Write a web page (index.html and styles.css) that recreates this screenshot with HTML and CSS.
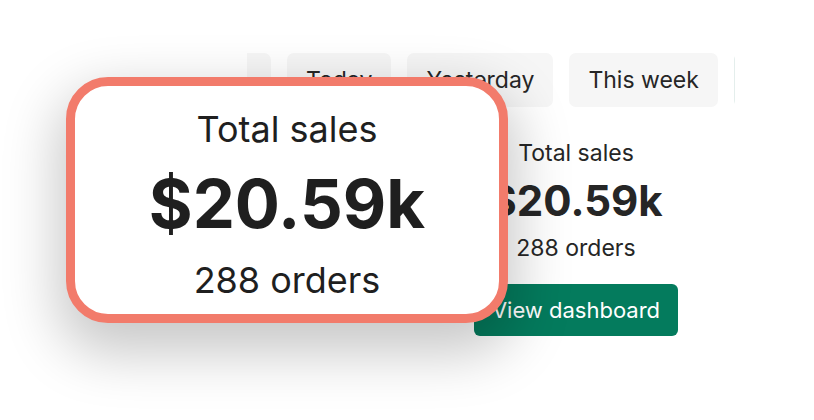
FILE: index.html
```html
<!DOCTYPE html>
<html lang="en">
<head>
    <meta charset="UTF-8">
    <meta name="viewport" content="width=device-width, initial-scale=1.0">
    <title>Total sales</title>
    <link rel="stylesheet" href="styles.css">
</head>
<body>
    <div class="scene">

        <div class="app">
            <div class="tabs">
                <div class="tab tab-cut"></div>
                <div class="tab">Today</div>
                <div class="tab">Yesterday</div>
                <div class="tab">This week</div>
                <div class="tab tab-next"></div>
            </div>

            <div class="stats">
                <p class="stats-label">Total sales</p>
                <p class="stats-value">$20.59k</p>
                <p class="stats-orders">288 orders</p>
                <a class="stats-button" href="#">View dashboard</a>
            </div>
        </div>

        <!-- zoomed callout over the stats -->
        <div class="callout">
            <p class="callout-label">Total sales</p>
            <p class="callout-value">$20.59k</p>
            <p class="callout-orders">288 orders</p>
        </div>

    </div>
</body>
</html>
```

FILE: styles.css
```css
body {
    margin: 0;
    padding: 0;
    background-color: #fff;
    font-family: Inter, "Noto Sans", sans-serif;
    color: #262626;
}
p {
    margin: 0;
}
.scene {
    position: relative;
    width: 814px;
    height: 420px;
    overflow: hidden;
}
.app {
    width: 488px;
    margin-left: 247px;
    padding-top: 53px;
    overflow: hidden;
}
.tabs {
    display: flex;
    gap: 16px;
    white-space: nowrap;
}
.tab {
    flex: none;
    height: 54px;
    padding: 0 19px;
    display: flex;
    align-items: center;
    border-radius: 7px;
    background-color: #f6f6f6;
    font-size: 23px;
}
.tab-cut {
    width: 24px;
    padding: 0;
    border-radius: 0 7px 7px 0;
}
.tab-next {
    width: 60px;
    background-color: #e4eeec;
}
.stats {
    width: 204px;
    margin-left: 227px;
    padding-top: 32px;
    display: flex;
    flex-direction: column;
    align-items: center;
}
.stats-label {
    font-size: 23px;
    line-height: 28px;
}
.stats-value {
    margin-top: 8px;
    font-size: 42px;
    font-weight: 700;
    line-height: 52px;
}
.stats-orders {
    margin-top: 7px;
    font-size: 23px;
    line-height: 28px;
}
.stats-button {
    margin-top: 22px;
    width: 204px;
    height: 52px;
    display: flex;
    align-items: center;
    justify-content: center;
    border-radius: 6px;
    background-color: #047b5d;
    color: #fff;
    font-size: 22px;
    text-decoration: none;
}
.callout {
    position: absolute;
    left: 66px;
    top: 77px;
    width: 442px;
    height: 246px;
    box-sizing: border-box;
    border: 9px solid #f27b6b;
    border-radius: 42px;
    background-color: #fff;
    box-shadow: 0 22px 55px 8px rgba(0, 0, 0, 0.22);
    display: flex;
    flex-direction: column;
    align-items: center;
    padding-top: 21px;
    color: #1f1f1f;
}
.callout-label {
    font-size: 36px;
    line-height: 44px;
}
.callout-value {
    margin-top: 13px;
    font-size: 67px;
    font-weight: 700;
    line-height: 80px;
}
.callout-orders {
    margin-top: 14px;
    font-size: 36px;
    line-height: 44px;
}
```
